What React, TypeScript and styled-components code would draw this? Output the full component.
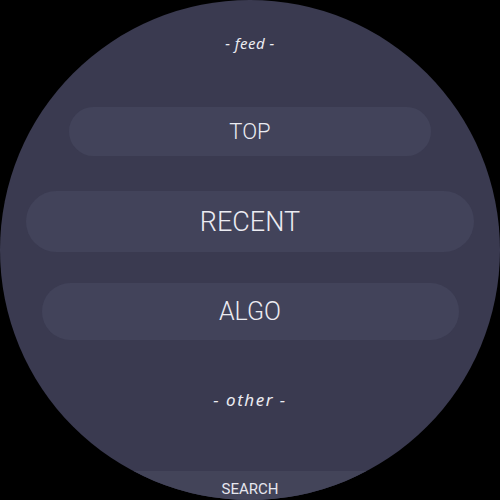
import React from "react";
import styled, { createGlobalStyle } from "styled-components";

const Global = createGlobalStyle`
  html, body { margin: 0; padding: 0; background: #000; }
  body { width: 500px; height: 500px; overflow: hidden; }
`;

const Watch = styled.div`
  width: 500px;
  height: 500px;
  border-radius: 50%;
  overflow: hidden;
  background: #3a3a50;
  display: flex;
  flex-direction: column;
  align-items: center;
  padding-top: 33px;
  box-sizing: border-box;
`;

const Label = styled.div<{ $size: number; $spacing: number; $mt: number }>`
  margin-top: ${(p) => p.$mt}px;
  height: 20px;
  line-height: 20px;
  font-family: "Noto Sans", "DejaVu Sans", sans-serif;
  font-style: italic;
  font-size: ${(p) => p.$size}px;
  letter-spacing: ${(p) => p.$spacing}px;
  color: #ececf2;
`;

const Chip = styled.div<{ $w: number; $h: number; $size: number; $mt: number }>`
  margin-top: ${(p) => p.$mt}px;
  width: ${(p) => p.$w}px;
  height: ${(p) => p.$h}px;
  border-radius: ${(p) => p.$h / 2}px;
  background: #42435a;
  display: flex;
  align-items: center;
  justify-content: center;
  font-family: Roboto, "Liberation Sans", sans-serif;
  font-weight: 300;
  font-size: ${(p) => p.$size}px;
  color: #ececf2;
  flex-shrink: 0;
`;

const SearchBar = styled.div`
  margin-top: 61px;
  width: 100%;
  height: 40px;
  background: #434459;
  display: flex;
  justify-content: center;
  padding-top: 9px;
  box-sizing: border-box;
  font-family: Roboto, "Liberation Sans", sans-serif;
  font-size: 15px;
  color: #e6e6ee;
  flex-shrink: 0;
`;

export default function App() {
  return (
    <>
      <Global />
      <Watch>
        <Label $size={15} $spacing={0.5} $mt={0}>- feed -</Label>
        <Chip $mt={54} $w={362} $h={49} $size={22}>TOP</Chip>
        <Chip $mt={35} $w={448} $h={61} $size={27}>RECENT</Chip>
        <Chip $mt={31} $w={417} $h={57} $size={25}>ALGO</Chip>
        <Label $size={17} $spacing={1.5} $mt={50}>- other -</Label>
        <SearchBar>SEARCH</SearchBar>
      </Watch>
    </>
  );
}
